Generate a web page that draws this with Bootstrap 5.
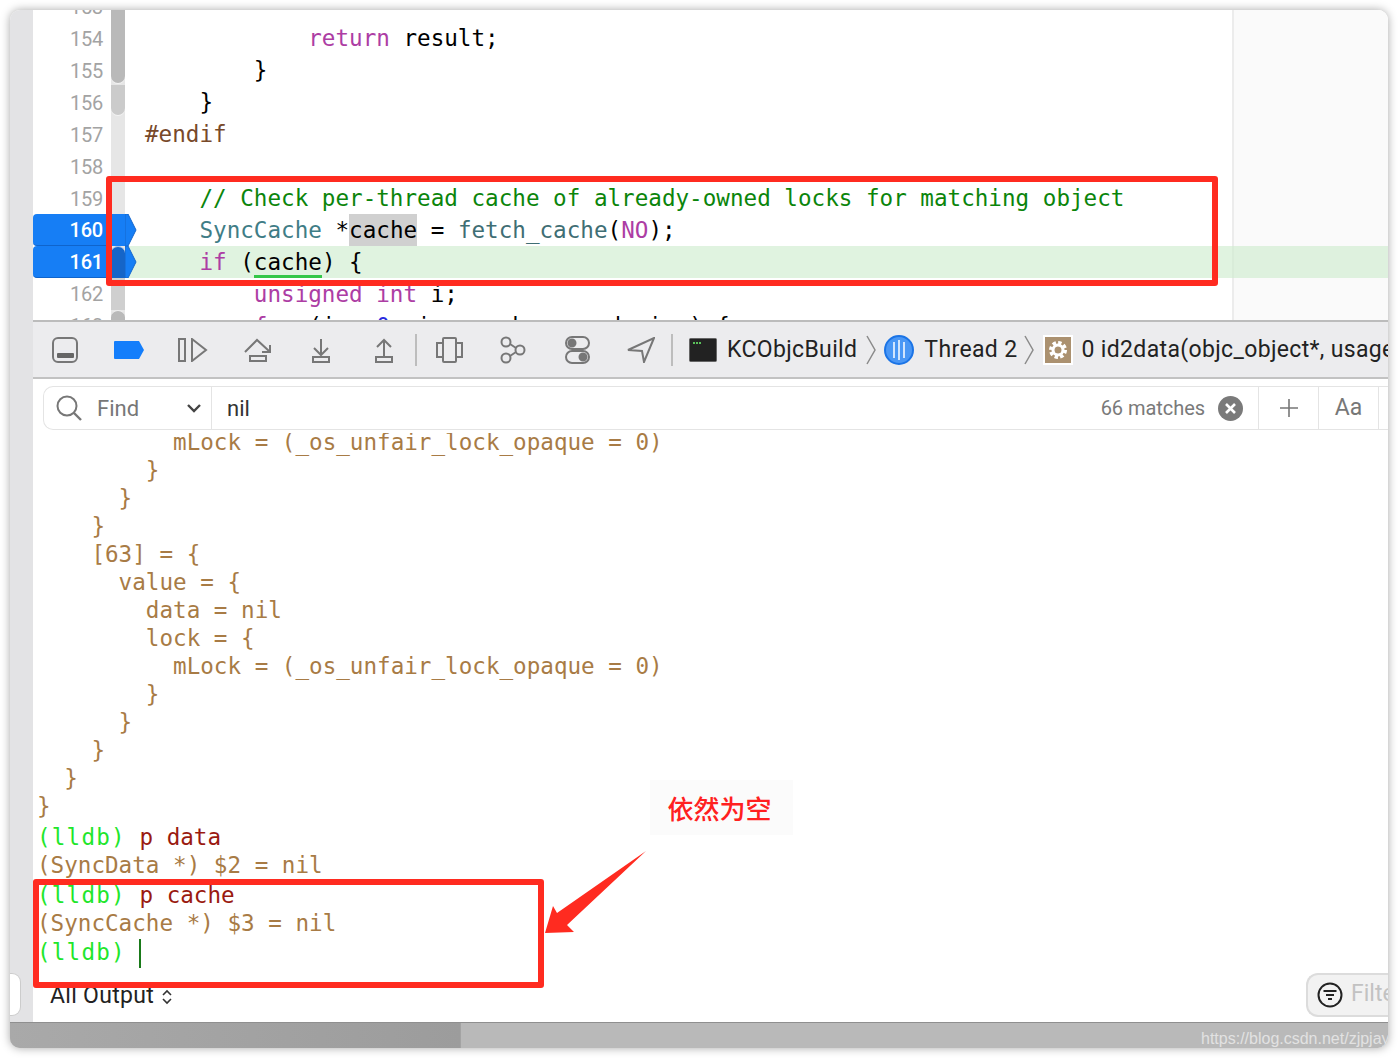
<!DOCTYPE html>
<html lang="en">
<head>
<meta charset="utf-8">
<title>Xcode debugger</title>
<link href="https://cdn.jsdelivr.net/npm/bootstrap@5.3.0/dist/css/bootstrap.min.css" rel="stylesheet">
<style>
html,body{overflow:hidden;height:1058px;background:#fff}
.win{margin:10px;width:1378px;height:1038px;border-radius:10px;overflow:hidden;position:relative;box-shadow:0 0 10px rgba(0,0,0,.35)}
.win-main{height:1012px}
.strip{width:23px;background:#e3e3e5}
.strip-tab{width:11px;height:43px;margin-top:auto;margin-bottom:6px;background:#fff;border:1px solid #ccc;border-left:0;border-radius:0 9px 9px 0}
.main-col{width:1355px;background:#fff}
.editor{height:310px;overflow:hidden;flex:none}
.mono{font-family:"DejaVu Sans Mono",monospace;font-size:22.6px}
.gut{width:78px;flex:none;margin-top:-19px;font-family:Roboto,sans-serif;font-size:20px;color:#a3a3a3;text-align:right}
.gut div{height:32px;line-height:32px;padding-right:8px;letter-spacing:-.2px}
.gut .bp{background:#167ef5;color:#fff;font-weight:500;border-radius:4px 0 0 4px;border-bottom:1px solid #0f64cc;position:relative;top:-1px}
.gut .after{position:relative;top:-1px}
.stripe{width:14px;flex:none;background:#e6e6e6;position:relative}
.s1{height:73px;background:#b9b9b9;border-radius:0 0 7px 7px;box-shadow:0 1px 0 #f3f3f3}
.s2{height:30px;margin-top:2px;background:#cbcbcb;border-radius:0 0 7px 7px;box-shadow:0 1px 0 #f3f3f3}
.s3{height:99px}
.s4{height:32px;background:#167ef5}
.s5{height:32px;background:#1565c8;border-radius:7px 7px 0 0;border-top:1px solid #9fc0e8}
.s6{height:32px;background:#cfcfcf}
.s7{height:10px;background:#b9b9b9;border-radius:7px 7px 0 0;border-top:1px solid #f0f0f0}
.bp-tip{position:absolute;left:92px;width:25px;height:32px;z-index:3}
.tip-a{top:204px}
.tip-b{top:236px}
.code{width:1107px;flex:none;margin-top:-20px;position:relative}
.ln{height:32px;line-height:32px;padding-left:20px;color:#000;white-space:pre}
.ln-cur{width:1263px;background:rgba(205,236,205,.62);position:relative;z-index:1}
.side-pane{flex:1;background:#fafafa;border-left:2px solid #ececec}
.k{color:#ad3da4}.pp{color:#78492a}.cm{color:#0b850b}.ty{color:#3f7d86}.fn{color:#3f6e74}.nm{color:#2a2ae0}
.sel{background:#d0d0d0;display:inline-block;height:32px}
.und{border-bottom:3px solid #33c748}
.tools{height:59px;flex:none;background:#ececee;border-top:2px solid #bcbcbc;border-bottom:2px solid #c2c2c2;padding-top:1px;font-family:Roboto,sans-serif;font-size:23px;color:#222;white-space:nowrap;overflow:hidden}
.tool-sep{width:2px;height:32px;background:#bdbdbd}
.crumb{letter-spacing:.35px}
.tb-0{margin-left:18px}.tb-a{margin-left:35px}.tb-b{margin-left:33px}.tb-c{margin-left:36px}.tb-d{margin-left:39px}.tb-d2{margin-left:43px}
.tb-e{margin-left:21px}.tb-f{margin-left:19px}.tb-g{margin-left:36px}.tb-h{margin-left:38px}.tb-i{margin-left:37px}.tb-j{margin-left:16px}.tb-k{margin-left:16px}
.tb-k2{margin-left:10px}.tb-l{margin-left:9px}.tb-m{margin-left:8px}.tb-n{margin-left:10px}.tb-o{margin-left:7px}.tb-p{margin-left:9px}.tb-q{margin-left:8px}
.findwrap{height:54px;flex:none;padding:7px 0 0 10px;background:#fff;position:relative;z-index:2}
.findbar{height:44px;border:1px solid #e4e4e4;border-right:0;border-radius:10px 0 0 10px;font-family:Roboto,sans-serif;font-size:22px;background:#fff}
.fcell{height:100%;border-left:1px solid #e4e4e4}
.fb-a{margin-left:11px}.fb-b{margin-left:14px;width:44px}.fb-c{margin-left:46px}.fb-d{margin-left:10px;padding-left:15px}.fb-e{margin-left:13px;margin-right:15px}.fb-f{width:10px}
.t-find{color:#777}
.t-nil{color:#333}
.t-match{color:#7a7a7a;font-size:20px;letter-spacing:-.05px}
.t-aa{color:#777;font-size:23px;width:60px}
.t-plus{width:60px}
.console{flex:1;overflow:hidden;color:#a87b45;padding:0 0 0 4px}
.console-in{margin-top:-5px}
.c{height:28px;line-height:28px;white-space:pre}
.gap3{margin-top:3px}.gap2{margin-top:2px}.gap1{margin-top:1px}
.pr{color:#1fe62c;letter-spacing:1.2px}.cmd{color:#9a1a10}
.caret{display:inline-block;width:2px;height:29px;background:#1a7a1a;vertical-align:middle}
.foot{height:49px;flex:none;background:#fff;font-family:Roboto,sans-serif;font-size:23px;color:#222}
.out{margin-left:17px;margin-top:-2px;letter-spacing:.3px}
.pill{width:82px;height:44px;margin-bottom:6px;overflow:hidden;background:#f2f2f2;border:2px solid #dcdcdc;border-right:0;border-radius:12px 0 0 12px;color:#c2c2c2;font-size:23px;padding-left:9px;white-space:nowrap}
.bot{height:26px;flex:none;background:#b9b9b9;border-top:1px solid #8f8f8f;position:relative;overflow:hidden}
.bot-l{width:451px;height:100%;background:linear-gradient(90deg,#a9a9a9,#9c9c9c);border-right:1px solid #a3a3a3}
.wm{margin-left:auto;font-family:"Liberation Sans",sans-serif;font-size:16px;color:#e2e2e2;line-height:32px;white-space:nowrap;width:187px;overflow:hidden}
.redbox{position:absolute;border:6px solid #ff2b20;border-radius:3px;z-index:5}
.rb1{left:96px;top:166px;width:1112px;height:110px}
.rb2{left:23px;top:869px;width:511px;height:109px}
.note{position:absolute;left:640px;top:770px;width:143px;height:55px;padding-right:4px;background:#fbfbfb;color:#ff2020;font-family:"Noto Sans CJK SC",sans-serif;font-weight:500;font-size:26px;z-index:5}
.arrow{position:absolute;left:530px;top:840px;z-index:5}
</style>
</head>
<body>
<div class="win d-flex flex-column">
  <div class="win-main d-flex">
    <div class="strip d-flex flex-column flex-shrink-0"><div class="strip-tab"></div></div>
    <div class="main-col d-flex flex-column">
      <div class="editor d-flex position-relative">
        <div class="gut">
          <div>153</div><div>154</div><div>155</div><div>156</div><div>157</div><div>158</div><div>159</div>
          <div class="bp">160</div><div class="bp">161</div><div class="after">162</div><div class="after">163</div>
        </div>
        <div class="stripe">
          <div class="s1"></div><div class="s2"></div><div class="s3"></div><div class="s4"></div><div class="s5"></div><div class="s6"></div><div class="s7"></div>
        </div>
        <svg class="bp-tip tip-a" viewBox="0 0 25 32"><path d="M0 0H3L11 16 3 32H0Z" fill="#167ef5" stroke="#1467cc"/></svg>
        <svg class="bp-tip tip-b" viewBox="0 0 25 32"><path d="M0 0H3L11 16 3 32H0Z" fill="#167ef5" stroke="#1467cc"/></svg>
        <div class="code mono">
          <div class="ln"> </div>
          <div class="ln">            <span class="k">return</span> result;</div>
          <div class="ln">        }</div>
          <div class="ln">    }</div>
          <div class="ln"><span class="pp">#endif</span></div>
          <div class="ln"> </div>
          <div class="ln">    <span class="cm">// Check per-thread cache of already-owned locks for matching object</span></div>
          <div class="ln">    <span class="ty">SyncCache</span> *<span class="sel">cache</span> = <span class="fn">fetch_cache</span>(<span class="k">NO</span>);</div>
          <div class="ln ln-cur">    <span class="k">if</span> (<span class="und">cache</span>) {</div>
          <div class="ln">        <span class="k">unsigned</span> <span class="k">int</span> i;</div>
          <div class="ln">        <span class="k">for</span> (i = <span class="nm">0</span>; i &lt; cache-&gt;used; i++) {</div>
        </div>
        <div class="side-pane"></div>
      </div>

      <div class="tools d-flex align-items-center">
        <svg class="tb-0 flex-shrink-0" width="28" height="28" viewBox="0 0 28 28" fill="none" stroke="#777" stroke-width="2"><rect x="2" y="2" width="24" height="24" rx="5"/><rect x="6" y="17" width="17" height="5" rx="1" fill="#666" stroke="none"/></svg>
        <svg class="flex-shrink-0 tb-a" width="31" height="18" viewBox="0 0 31 18"><path d="M0 1a1 1 0 0 1 1-1H25L30 9 25 18H1a1 1 0 0 1-1-1Z" fill="#147efb"/></svg>
        <svg class="flex-shrink-0 tb-b" width="30" height="24" viewBox="0 0 30 24" fill="none" stroke="#777" stroke-width="2"><rect x="1" y="1" width="6" height="22"/><path d="M14 1 28 12 14 23Z"/></svg>
        <svg class="flex-shrink-0 tb-c" width="28" height="24" viewBox="0 0 28 24" fill="none" stroke="#777" stroke-width="2"><path d="M1 14 13 2 25 13M18 14H26V7"/><rect x="6" y="18" width="16" height="5"/></svg>
        <svg class="flex-shrink-0 tb-d" width="20" height="25" viewBox="0 0 20 25" fill="none" stroke="#777" stroke-width="2"><path d="M10 1V16M3 10 10 17 17 10"/><rect x="2" y="19" width="16" height="5"/></svg>
        <svg class="flex-shrink-0 tb-d2" width="20" height="25" viewBox="0 0 20 25" fill="none" stroke="#777" stroke-width="2"><path d="M10 18V3M3 9 10 2 17 9"/><rect x="2" y="19" width="16" height="5"/></svg>
        <div class="tool-sep flex-shrink-0 tb-e"></div>
        <svg class="flex-shrink-0 tb-f" width="27" height="26" viewBox="0 0 27 26" fill="none" stroke="#777" stroke-width="2"><rect x="7" y="1" width="13" height="24" rx="1"/><path d="M7 6H1V20H7M20 6H26V20H20"/></svg>
        <svg class="flex-shrink-0 tb-g" width="28" height="28" viewBox="0 0 28 28" fill="none" stroke="#777" stroke-width="2"><circle cx="7" cy="6" r="4.5"/><circle cx="7" cy="22" r="4.5"/><circle cx="21" cy="14" r="4.5"/><path d="M11 8 17 12M11 20 17 16"/></svg>
        <svg class="flex-shrink-0 tb-h" width="25" height="28" viewBox="0 0 25 28" fill="none" stroke="#777" stroke-width="2"><rect x="1" y="1" width="23" height="12" rx="6"/><rect x="1" y="15" width="23" height="12" rx="6"/><circle cx="7" cy="7" r="3.5" fill="#777"/><circle cx="18" cy="21" r="3.5" fill="#777"/></svg>
        <svg class="flex-shrink-0 tb-i" width="28" height="26" viewBox="0 0 28 26" fill="none" stroke="#777" stroke-width="2"><path d="M1 13 27 1 17 25 15 14Z"/></svg>
        <div class="tool-sep flex-shrink-0 tb-j"></div>
        <svg class="flex-shrink-0 tb-k" width="28" height="24" viewBox="0 0 28 24"><rect x=".5" y=".5" width="27" height="23" rx="1" fill="#222" stroke="#666"/><path d="M4 5H13" stroke="#5ac05a" stroke-width="2" stroke-dasharray="2 1"/></svg>
        <span class="crumb tb-k2">KCObjcBuild</span>
        <svg class="flex-shrink-0 tb-l" width="10" height="30" viewBox="0 0 10 30" fill="none" stroke="#8a8a8a" stroke-width="1.5"><path d="M1 1 9 15 1 29"/></svg>
        <svg class="flex-shrink-0 tb-m" width="30" height="30" viewBox="0 0 30 30"><circle cx="15" cy="15" r="14" fill="#4a97f5" stroke="#1b74e6" stroke-width="2"/><path d="M10 7V23M15 5V25M20 7V23" stroke="#fff" stroke-width="1.5"/></svg>
        <span class="crumb tb-n">Thread 2</span>
        <svg class="flex-shrink-0 tb-o" width="10" height="30" viewBox="0 0 10 30" fill="none" stroke="#8a8a8a" stroke-width="1.5"><path d="M1 1 9 15 1 29"/></svg>
        <svg class="flex-shrink-0 tb-p" width="30" height="30" viewBox="0 0 30 30"><rect x="1" y="1" width="28" height="28" fill="#ab9170" stroke="#fff" stroke-width="2"/><circle cx="15" cy="15" r="6.5" fill="none" stroke="#fff" stroke-width="5" stroke-dasharray="3 2"/><circle cx="15" cy="15" r="5" fill="none" stroke="#fff" stroke-width="3"/></svg>
        <span class="crumb tb-q">0 id2data(objc_object*, usage</span>
      </div>

      <div class="findwrap">
        <div class="findbar d-flex align-items-center">
          <svg class="flex-shrink-0 fb-a" width="28" height="28" viewBox="0 0 28 28" fill="none" stroke="#777" stroke-width="2"><circle cx="12" cy="12" r="9.5"/><path d="M19 19 26 26" stroke-width="2.4"/></svg>
          <span class="t-find fb-b">Find</span>
          <svg class="flex-shrink-0 fb-c" width="14" height="9" viewBox="0 0 14 9" fill="none" stroke="#444" stroke-width="2.4"><path d="M1 1 7 7 13 1"/></svg>
          <div class="fcell d-flex align-items-center flex-grow-1 fb-d">
            <span class="t-nil">nil</span>
            <span class="t-match ms-auto">66 matches</span>
            <svg class="flex-shrink-0 fb-e" width="25" height="25" viewBox="0 0 25 25"><circle cx="12.5" cy="12.5" r="12.5" fill="#7a7a7a"/><path d="M8 8 17 17M17 8 8 17" stroke="#fff" stroke-width="2.6"/></svg>
          </div>
          <div class="fcell t-plus d-flex align-items-center justify-content-center flex-shrink-0"><svg width="18" height="18" viewBox="0 0 18 18" stroke="#777" stroke-width="1.6"><path d="M9 0V18M0 9H18"/></svg></div>
          <div class="fcell t-aa d-flex align-items-center justify-content-center flex-shrink-0">Aa</div>
          <div class="fcell flex-shrink-0 fb-f"></div>
        </div>
      </div>

      <div class="console mono">
        <div class="console-in">
          <div class="c">          mLock = (_os_unfair_lock_opaque = 0)</div>
          <div class="c">        }</div>
          <div class="c">      }</div>
          <div class="c">    }</div>
          <div class="c">    [63] = {</div>
          <div class="c">      value = {</div>
          <div class="c">        data = nil</div>
          <div class="c">        lock = {</div>
          <div class="c">          mLock = (_os_unfair_lock_opaque = 0)</div>
          <div class="c">        }</div>
          <div class="c">      }</div>
          <div class="c">    }</div>
          <div class="c">  }</div>
          <div class="c">}</div>
          <div class="c gap3"><span class="pr">(lldb)</span> <span class="cmd">p data</span></div>
          <div class="c">(SyncData *) $2 = nil</div>
          <div class="c gap2"><span class="pr">(lldb)</span> <span class="cmd">p cache</span></div>
          <div class="c">(SyncCache *) $3 = nil</div>
          <div class="c gap1"><span class="pr">(lldb)</span> <span class="caret"></span></div>
        </div>
      </div>

      <div class="foot d-flex align-items-center justify-content-between">
        <div class="out d-flex align-items-center gap-2"><span>All Output</span><svg width="10" height="16" viewBox="0 0 10 16" fill="none" stroke="#333" stroke-width="1.6"><path d="M1 6 5 2 9 6M1 10 5 14 9 10"/></svg></div>
        <div class="pill d-flex align-items-center gap-2">
          <svg class="flex-shrink-0" width="26" height="26" viewBox="0 0 26 26" fill="none" stroke="#222" stroke-width="2"><circle cx="13" cy="13" r="11.5"/><path d="M6.5 9H19.5M9 13H17M11 17H15"/></svg>
          <span>Filter</span>
        </div>
      </div>
    </div>
  </div>
  <div class="bot d-flex">
    <div class="bot-l"></div>
    <div class="wm">https://blog.csdn.net/zjpjay</div>
  </div>

  <div class="redbox rb1"></div>
  <div class="redbox rb2"></div>
  <div class="note d-flex align-items-center justify-content-center">依然为空</div>
  <svg class="arrow" width="110" height="100" viewBox="0 0 110 100"><path d="M106 1 27 75 34 82 5 83 13 56 17 63Z" fill="#ff2b20"/></svg>
</div>
</body>
</html>
